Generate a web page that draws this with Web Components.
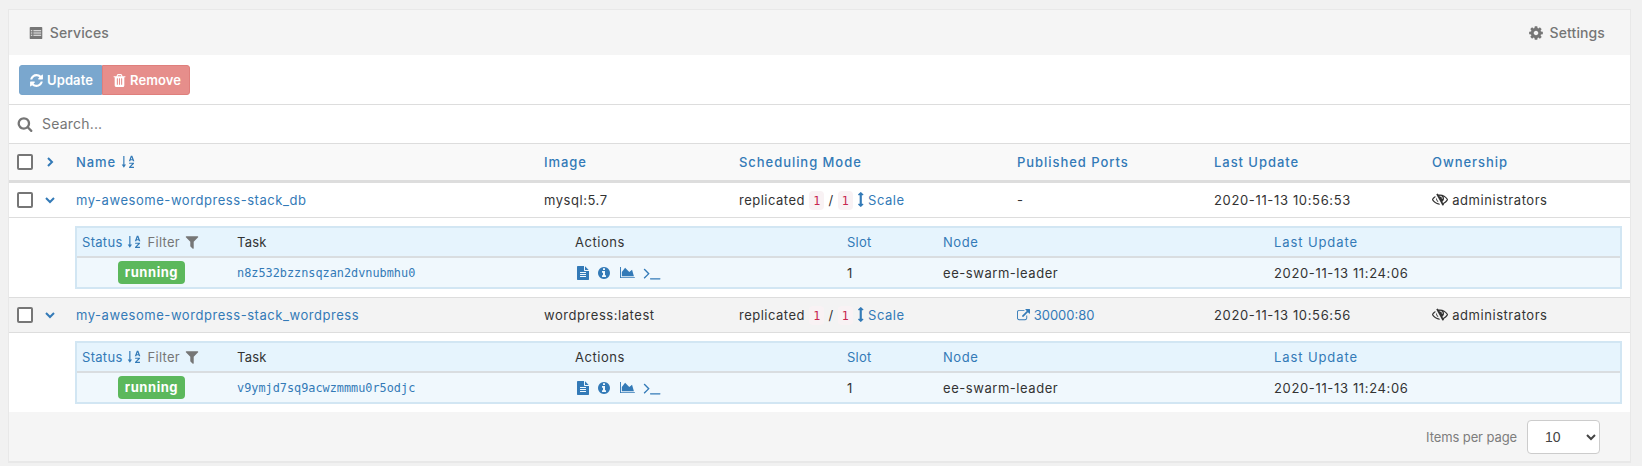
<!DOCTYPE html>
<html>
<head>
<meta charset="utf-8">
<title>Services</title>
<style>
  html, body { margin: 0; height: 466px; overflow: hidden; background: #f1f1f1; }
  body { padding: 9px 11px 0 8px; box-sizing: border-box; font: 13px/18px Inter, "Liberation Sans", sans-serif; color: #333; letter-spacing: .55px; }
</style>
</head>
<body>
<services-panel>
  <service-row name="my-awesome-wordpress-stack_db" image="mysql:5.7" updated="2020-11-13 10:56:53">
    <span slot="ports">-</span>
    <task-table task="n8z532bzznsqzan2dvnubmhu0"></task-table>
  </service-row>
  <service-row name="my-awesome-wordpress-stack_wordpress" image="wordpress:latest" updated="2020-11-13 10:56:56" striped>
    <a slot="ports" style="letter-spacing:0"><fa-icon name="external"></fa-icon> 30000:80</a>
    <task-table task="v9ymjd7sq9acwzmmmu0r5odjc"></task-table>
  </service-row>
</services-panel>

<script>
const ICONS = {
  list: ['0 0 1792 1792', 'M288 224h1216q96 0 96 96v1152q0 96-96 96H288q-96 0-96-96V320q0-96 96-96zM320 576v128h160V576zM608 576v128h864V576zM320 832v128h160V832zM608 832v128h864V832zM320 1088v128h160v-128zM608 1088v128h864v-128z'],
  cog: ['0 0 1792 1792', 'M1152 896q0-106-75-181t-181-75-181 75-75 181 75 181 181 75 181-75 75-181zm512-109v222q0 12-8 23t-20 13l-185 28q-19 54-39 91 35 50 107 138 10 12 10 25t-9 23q-27 37-99 108t-94 71q-12 0-26-9l-138-108q-44 23-91 38-16 136-29 186-7 28-36 28h-222q-14 0-24.500-8.500t-11.500-21.500l-28-184q-49-16-90-37l-141 107q-10 9-25 9-14 0-25-11-126-114-165-168-7-10-7-23 0-12 8-23 15-21 51-66.500t54-70.500q-27-50-41-99l-183-27q-13-2-21-12.500t-8-23.500v-222q0-12 8-23t19-13l186-28q14-46 39-92-40-57-107-138-10-12-10-24 0-10 9-23 26-36 98.500-107.500t94.500-71.500q13 0 26 10l138 107q44-23 91-38 16-136 29-186 7-28 36-28h222q14 0 24.500 8.500t11.500 21.500l28 184q49 16 90 37l142-107q9-9 24-9 13 0 25 10 129 119 165 170 7 8 7 22 0 12-8 23-15 21-51 66.500t-54 70.500q26 50 41 98l183 28q13 2 21 12.500t8 23.500z'],
  refresh: ['0 0 1792 1792', 'M1639 1056q0 5-1 7-64 268-268 434.500t-478 166.500q-146 0-282.500-55t-243.500-157l-129 129q-19 19-45 19t-45-19-19-45v-448q0-26 19-45t45-19h448q26 0 45 19t19 45-19 45l-137 137q71 66 161 102t187 36q134 0 250-65t186-179q11-17 53-117 8-23 30-23h192q13 0 22.500 9.500t9.500 22.500zm25-800v448q0 26-19 45t-45 19h-448q-26 0-45-19t-19-45 19-45l138-138q-148-137-349-137-134 0-250 65t-186 179q-11 17-53 117-8 23-30 23h-199q-13 0-22.500-9.500t-9.500-22.500v-7q65-268 270-434.500t480-166.500q146 0 284 55.500t245 156.500l130-129q19-19 45-19t45 19 19 45z'],
  trash: ['0 0 1792 1792', 'M704 1376v-704q0-14-9-23t-23-9h-64q-14 0-23 9t-9 23v704q0 14 9 23t23 9h64q14 0 23-9t9-23zm256 0v-704q0-14-9-23t-23-9h-64q-14 0-23 9t-9 23v704q0 14 9 23t23 9h64q14 0 23-9t9-23zm256 0v-704q0-14-9-23t-23-9h-64q-14 0-23 9t-9 23v704q0 14 9 23t23 9h64q14 0 23-9t9-23zm-544-992h448l-48-117q-7-9-17-11h-317q-10 2-17 11zm928 32v64q0 14-9 23t-23 9h-96v948q0 83-47 143.500t-113 60.500h-832q-66 0-113-58.500t-47-141.500v-952h-96q-14 0-23-9t-9-23v-64q0-14 9-23t23-9h309l70-167q15-37 54-63t79-26h320q40 0 79 26t54 63l70 167h309q14 0 23 9t9 23z'],
  search: ['0 0 1792 1792', 'M1216 832q0-185-131.500-316.500t-316.500-131.500-316.500 131.500-131.500 316.500 131.500 316.500 316.500 131.500 316.500-131.500 131.500-316.500zm512 832q0 52-38 90t-90 38q-54 0-90-38l-343-342q-179 124-399 124-143 0-273.500-55.500t-225-150-150-225-55.500-273.500 55.500-273.500 150-225 225-150 273.500-55.500 273.500 55.500 225 150 150 225 55.500 273.500q0 220-124 399l343 343q37 37 37 90z'],
  filter: ['0 0 1792 1792', 'M1595 295q17 41-14 70l-493 493v742q0 42-39 59-13 5-25 5-27 0-45-19l-256-256q-19-19-19-45v-486l-493-493q-31-29-14-70 17-39 59-39h1280q42 0 59 39z'],
  info: ['0 0 1792 1792', 'M1152 1376v-160q0-14-9-23t-23-9h-96v-512q0-14-9-23t-23-9h-320q-14 0-23 9t-9 23v160q0 14 9 23t23 9h96v320h-96q-14 0-23 9t-9 23v160q0 14 9 23t23 9h448q14 0 23-9t9-23zm-128-896v-160q0-14-9-23t-23-9h-192q-14 0-23 9t-9 23v160q0 14 9 23t23 9h192q14 0 23-9t9-23zm640 416q0 209-103 385.500t-279.500 279.500-385.500 103-385.500-103-279.500-279.500-103-385.500 103-385.500 279.500-279.500 385.500-103 385.500 103 279.500 279.500 103 385.500z'],
  chart: ['0 0 2048 1792', 'M2048 1536v128h-2048v-1536h128v1408h1920zm-384-1024l256 896h-1664v-576l448-576 576 576z'],
  file: ['0 0 1792 1792', 'M1596 476q14 14 28 36h-472v-472q22 14 36 28zm-476 164h544v1056q0 40-28 68t-68 28h-1344q-40 0-68-28t-28-68v-1600q0-40 28-68t68-28h800v544q0 40 28 68t68 28zm160 736v-64q0-14-9-23t-23-9h-704q-14 0-23 9t-9 23v64q0 14 9 23t23 9h704q14 0 23-9t9-23zm0-256v-64q0-14-9-23t-23-9h-704q-14 0-23 9t-9 23v64q0 14 9 23t23 9h704q14 0 23-9t9-23zm0-256v-64q0-14-9-23t-23-9h-704q-14 0-23 9t-9 23v64q0 14 9 23t23 9h704q14 0 23-9t9-23z'],
  terminal: ['0 0 1792 1792', 'M649 983l-466 466q-10 10-23 10t-23-10l-50-50q-10-10-10-23t10-23l393-393-393-393q-10-10-10-23t10-23l50-50q10-10 23-10t23 10l466 466q10 10 10 23t-10 23zm1079 457v64q0 14-9 23t-23 9h-960q-14 0-23-9t-9-23v-64q0-14 9-23t23-9h960q14 0 23 9t9 23z'],
  updown: ['256 0 832 1792', 'M1024 320q0 26-19 45t-45 19h-128v1024h128q26 0 45 19t19 45-19 45l-256 256q-19 19-45 19t-45-19l-256-256q-19-19-19-45t19-45 45-19h128v-1024h-128q-26 0-45-19t-19-45 19-45l256-256q19-19 45-19t45 19l256 256q19 19 19 45z'],
  external: ['0 0 1792 1792', 'M1408 928v320q0 119-84.500 203.500t-203.500 84.500h-832q-119 0-203.500-84.500t-84.500-203.500v-832q0-119 84.500-203.500t203.500-84.500h704q14 0 23 9t9 23v64q0 14-9 23t-23 9h-704q-66 0-113 47t-47 113v832q0 66 47 113t113 47h832q66 0 113-47t47-113v-320q0-14 9-23t23-9h64q14 0 23 9t9 23zm384-864v512q0 26-19 45t-45 19-45-19l-176-176-652 652q-10 10-23 10t-23-10l-114-114q-10-10-10-23t10-23l652-652-176-176q-19-19-19-45t19-45 45-19h512q26 0 45 19t19 45z'],
  eyeoff: ['0 0 1792 1792', 'M555 1335l78-141q-87-63-136-159t-49-203q0-121 61-225-229 117-381 353 167 258 427 375zm389-759q0-20-14-34t-34-14q-125 0-214.500 89.500t-89.500 214.500q0 20 14 34t34 14 34-14 14-34q0-86 61-147t147-61q20 0 34-14t14-34zm363-191q0 7-1 9-106 189-316 567t-315 566l-49 89q-10 16-28 16-12 0-134-70-16-10-16-28 0-12 44-87-143-65-263.500-173t-208.500-245q-20-31-20-69t20-69q153-235 380-371t496-136q89 0 180 17l54-97q10-16 28-16 5 0 18 6t31 15.500 33 18.500 31.500 18.500 19.500 11.500q16 10 16 27zm37 447q0 139-79 253.500t-209 164.500l280-502q8 45 8 84zm448 128q0 35-20 69-39 64-109 145-150 172-347.500 267t-419.500 95l74-132q212-18 392.500-137t301.500-307q-115-179-282-294l63-112q95 64 182.500 153t144.500 184q20 34 20 69z'],
  sort: ['0 0 1792 1792', 'M90 1216h200V120h150v1096h200L365 1640zM1000 800l260-700h190l260 700h-190l-40-120h-250l-40 120zM1270 540h170l-85-260zM1040 980h620v130l-400 400h400v140h-630v-130l400-400h-390z']
};

class FaIcon extends HTMLElement {
  connectedCallback() {
    const [box, d] = ICONS[this.getAttribute('name')];
    const size = this.getAttribute('size') || '13';
    const w = box.split(' ')[2] / box.split(' ')[3] * size;
    this.attachShadow({ mode: 'open' }).innerHTML = `
      <style>
        :host { display: inline-block; vertical-align: -2px; line-height: 0; }
        :host([flip]) svg { transform: scaleX(-1); }
      </style>
      <svg width="${w}" height="${size}" viewBox="${box}" fill="currentColor"><path d="${d}"/></svg>`;
  }
}
customElements.define('fa-icon', FaIcon);

const rowGrid = 'grid-template-columns: 67px 468px 195px 278px 197px 218px 1fr;';

class ServicesPanel extends HTMLElement {
  constructor() {
    super();
    this.attachShadow({ mode: 'open' }).innerHTML = `
      <style>
        :host { display: block; background: #fff; border: 1px solid #e8e8e8; border-bottom-width: 2px; }
        .title { display: flex; justify-content: space-between; align-items: center; height: 45px; padding: 0 25px 0 19px; background: #f5f5f5; color: #767676; font-size: 14px; letter-spacing: .1px; font-weight: 500; }
        .title fa-icon { margin-right: 2px; vertical-align: -3px; }
        .actions { display: flex; height: 50px; padding: 10px; box-sizing: border-box; border-bottom: 1px solid #ddd; }
        button { display: flex; align-items: center; gap: 3px; height: 30px; border: 1px solid; font: 600 13px/16px Inter, sans-serif; letter-spacing: .1px; color: #fff; padding: 0 9px; }
        .update { width: 83px; background: #7aa7ce; border-color: #78a5cc; border-radius: 3px 0 0 3px; }
        .remove { width: 88px; background: #e68e8b; border-color: #df7f7c; border-radius: 0 3px 3px 0; }
        .search { display: flex; align-items: center; gap: 9px; height: 38px; padding: 0 8px; color: #767676; font-size: 14px; letter-spacing: .2px; border-bottom: 1px solid #ddd; }
        .head { display: grid; ${rowGrid} align-items: center; height: 36px; background: #f9f9f9; border-bottom: 3px solid #ddd; color: #337ab7; font-weight: 500; letter-spacing: .95px; }
        .lead { display: flex; align-items: center; padding-left: 8px; }
        .box { width: 12px; height: 12px; border: 2px solid #767676; border-radius: 2px; background: #fff; }
        .lead svg { margin-left: 13px; }
        .footer { display: flex; justify-content: flex-end; align-items: center; gap: 10px; height: 49px; padding-right: 30px; background: #f5f5f5; color: #7d7d7d; letter-spacing: -.1px; }
        select { width: 73px; height: 34px; padding-left: 13px; background: #fff; border: 1px solid #ccc; border-radius: 4px; color: #444; font: 14px "Liberation Sans", sans-serif; }
      </style>
      <div class="title">
        <span><fa-icon name="list" size="16"></fa-icon> Services</span>
        <span><fa-icon name="cog" size="16"></fa-icon> Settings</span>
      </div>
      <div class="actions">
        <button class="update"><fa-icon name="refresh" size="15"></fa-icon>Update</button>
        <button class="remove"><fa-icon name="trash" size="15"></fa-icon>Remove</button>
      </div>
      <div class="search"><fa-icon name="search" size="16"></fa-icon>Search...</div>
      <div class="head">
        <div class="lead"><div class="box"></div>
          <svg width="8" height="10" viewBox="0 0 8 10" fill="none" stroke="#337ab7" stroke-width="2"><path d="M2 1l4 4-4 4"/></svg></div>
        <div>Name <fa-icon name="sort" size="14"></fa-icon></div>
        <div>Image</div><div>Scheduling Mode</div><div>Published Ports</div><div>Last Update</div><div>Ownership</div>
      </div>
      <slot></slot>
      <div class="footer"><span>Items per page</span>
        <select><option>10</option><option>25</option><option>50</option></select></div>`;
  }
}
customElements.define('services-panel', ServicesPanel);

class ServiceRow extends HTMLElement {
  connectedCallback() {
    const a = n => this.getAttribute(n);
    const stripe = this.hasAttribute('striped') ? '#f3f3f3' : '#fff';
    this.attachShadow({ mode: 'open' }).innerHTML = `
      <style>
        :host { display: block; }
        .row { display: grid; ${rowGrid} align-items: center; height: 34px; background: ${stripe}; border-bottom: 1px solid #ddd; }
        .lead { display: flex; align-items: center; padding-left: 8px; }
        .box { width: 12px; height: 12px; border: 2px solid #767676; border-radius: 2px; background: #fff; }
        .lead svg { margin-left: 12px; }
        a, ::slotted(a) { color: #337ab7; }
        .date { letter-spacing: .65px; }
        .mode { letter-spacing: .5px; }
        code { display: inline-block; margin: -1px 0; font: 11.7px/16px "DejaVu Sans Mono", monospace; letter-spacing: 0; color: #c7254e; background: #f9f2f4; border-radius: 4px; padding: 1.5px 4px; }
        .nested { padding: 8px 8px 8px 66px; background: #fff; border-bottom: 1px solid #ddd; }
        :host(:last-child) .nested { border-bottom: 0; }
      </style>
      <div class="row">
        <div class="lead"><div class="box"></div>
          <svg width="10" height="8" viewBox="0 0 10 8" fill="none" stroke="#337ab7" stroke-width="2"><path d="M1 2l4 4 4-4"/></svg></div>
        <a>${a('name')}</a>
        <div>${a('image')}</div>
        <div class="mode">replicated <code>1</code> / <code>1</code> <a><fa-icon name="updown" size="15"></fa-icon> Scale</a></div>
        <div><slot name="ports"></slot></div>
        <div class="date">${a('updated')}</div>
        <div><fa-icon name="eyeoff" size="16" flip></fa-icon> administrators</div>
      </div>
      <div class="nested"><slot></slot></div>`;
  }
}
customElements.define('service-row', ServiceRow);

class TaskTable extends HTMLElement {
  connectedCallback() {
    const cols = 'grid-template-columns: 160px 338px 272px 96px 331px 1fr;';
    this.attachShadow({ mode: 'open' }).innerHTML = `
      <style>
        :host { display: block; border: 2px solid #d2e6f3; }
        .head, .row { display: grid; ${cols} align-items: center; }
        .head { height: 28px; background: #e6f4fd; border-bottom: 2px solid #d9dde0; }
        .row { height: 29px; background: #f0f8fd; }
        .link { color: #337ab7; }
        .st { padding-left: 5px; white-space: nowrap; letter-spacing: .3px; }
        .filter { color: #767676; margin-left: 3px; }
        .filter fa-icon { vertical-align: -3px; }
        .status { display: flex; padding-left: 41px; }
        .badge { width: 67px; height: 23px; text-align: center; background: #5cb85c; color: #fff; font: 700 13px/22px Inter, sans-serif; border-radius: 4px; }
        .mono { font: 11.85px/16px "DejaVu Sans Mono", monospace; letter-spacing: 0; color: #337ab7; }
        .icons { display: flex; align-items: center; gap: 7px; color: #337ab7; padding-left: 1px; }
        .chart { margin-left: 2px; }
        .term { margin-left: 1px; }
        .wide { letter-spacing: .9px; }
        .date { letter-spacing: .65px; }
      </style>
      <div class="head">
        <div class="st"><span class="link">Status</span> <span class="link"><fa-icon name="sort" size="14"></fa-icon></span>
          <span class="filter">Filter <fa-icon name="filter" size="16"></fa-icon></span></div>
        <div style="letter-spacing:.2px">Task</div><div>Actions</div><div class="link" style="letter-spacing:.2px">Slot</div><div class="link">Node</div><div class="link wide">Last Update</div>
      </div>
      <div class="row">
        <div class="status"><span class="badge">running</span></div>
        <div class="mono">${this.getAttribute('task')}</div>
        <div class="icons"><fa-icon name="file" size="14"></fa-icon><fa-icon name="info" size="14"></fa-icon><fa-icon class="chart" name="chart" size="13"></fa-icon><fa-icon class="term" name="terminal" size="18"></fa-icon></div>
        <div>1</div><div>ee-swarm-leader</div><div class="date">2020-11-13 11:24:06</div>
      </div>`;
  }
}
customElements.define('task-table', TaskTable);
</script>
</body>
</html>
